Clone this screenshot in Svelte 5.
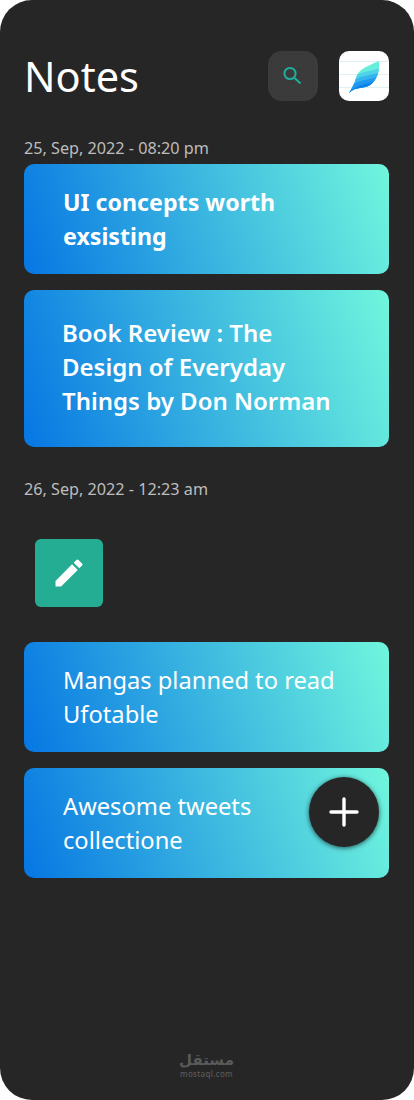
<script lang="ts">
  interface Note {
    title: string;
    weight?: string;
  }

  const first: Note[] = [
    { title: "UI concepts worth exsisting", weight: "bold" },
    { title: "Book Review : The Design of Everyday Things by Don Norman", weight: "semi" },
  ];
  const second: Note[] = [
    { title: "Mangas planned to read Ufotable" },
    { title: "Awesome tweets collectione" },
  ];
</script>

<div class="screen">
  <header class="top">
    <h1>Notes</h1>
    <button class="search" aria-label="Search">
      <svg width="24" height="24" viewBox="0 0 24 24" fill="none" stroke="#1fae9b" stroke-width="2">
        <circle cx="9" cy="9.5" r="5.6" />
        <path d="M13 13.5L19.5 19.5" />
      </svg>
    </button>
    <div class="logo">
      <svg width="50" height="50" viewBox="0 0 50 50">
        <defs>
          <clipPath id="leaf"><path d="M10 42 C13 37 16 32 17 27 C19 18 29 15 40 10 C41 20 38 29 31 34 C25 38 17 35 10 42 Z" /></clipPath>
        </defs>
        <path d="M0 10.5H50M0 23.5H50M0 36.5H50" stroke="#dcf0f6" stroke-width="1" />
        <g clip-path="url(#leaf)">
          <rect width="50" height="50" fill="#66eedd" />
          <path d="M8 29 C18 21 30 21 42 17 V50 H8 Z" fill="#4fd3e8" />
          <path d="M8 33 C18 25 30 25 42 21 V50 H8 Z" fill="#37b4ee" />
          <path d="M8 37 C18 29 30 29 42 25 V50 H8 Z" fill="#1f98f0" />
          <path d="M8 43 C18 33 28 33 42 29 V50 H8 Z" fill="#0f80ea" />
        </g>
      </svg>
    </div>
  </header>

  <p class="date">25, Sep, 2022 - 08:20 pm</p>
  <div class="notes">
    {#each first as note}
      <article class="card {note.weight ?? ''}">{note.title}</article>
    {/each}
  </div>

  <p class="date second">26, Sep, 2022 - 12:23 am</p>
  <button class="edit" aria-label="Edit">
    <svg width="36" height="36" viewBox="0 0 24 24" fill="#fff">
      <path d="M3 17.25V21h3.75L17.81 9.94l-3.75-3.75L3 17.25zM20.71 7.04a1 1 0 0 0 0-1.41l-2.34-2.34a1 1 0 0 0-1.41 0l-1.83 1.83 3.75 3.75 1.83-1.83z" />
    </svg>
  </button>

  <div class="notes lower">
    {#each second as note}
      <article class="card">{note.title}</article>
    {/each}
    <button class="fab" aria-label="Add note">
      <svg width="30" height="30" viewBox="0 0 30 30">
        <path d="M15 2V28M2 15H28" stroke="#fff" stroke-width="3.4" stroke-linecap="round" />
      </svg>
    </button>
  </div>

  <footer class="mark">
    <span class="ar" dir="rtl">مستقل</span>
    <span class="en">mostaql.com</span>
  </footer>
</div>

<style>
  :global(body) {
    background: #fff;
  }
  .screen {
    width: 414px;
    height: 1100px;
    box-sizing: border-box;
    padding: 51px 25px 0 24px;
    background: #262626;
    border-radius: 32px;
    display: flex;
    flex-direction: column;
    font-family: "Noto Sans", "Open Sans", sans-serif;
    color: #fff;
  }
  .top {
    display: flex;
    align-items: center;
    height: 50px;
  }
  h1 {
    margin: 0 auto 0 0;
    font-size: 41.5px;
    font-weight: 400;
    line-height: 50px;
  }
  .search {
    width: 50px;
    height: 50px;
    padding: 0;
    border: 0;
    border-radius: 14px;
    background-color: #3b3b3b;
    background-image: radial-gradient(circle, #2f2f2f 0.8px, transparent 1px);
    background-size: 7px 7px;
    display: flex;
    align-items: center;
    justify-content: center;
  }
  .logo {
    width: 50px;
    height: 50px;
    margin-left: 21px;
    background: #fff;
    border-radius: 10px;
    overflow: hidden;
  }
  .logo svg {
    display: block;
  }
  .date {
    margin: 37px 0 6px;
    font-size: 16.2px;
    line-height: 20px;
    color: #bdbdbd;
  }
  .date.second {
    margin-top: 32px;
    margin-bottom: 40px;
  }
  .notes {
    display: flex;
    flex-direction: column;
    gap: 16px;
  }
  .lower {
    position: relative;
    margin-top: 35px;
  }
  .card {
    padding: 21px 39px;
    font-size: 23.7px;
    line-height: 34px;
    border-radius: 10px;
    background: linear-gradient(72deg, #0676e3 0%, #70f6dd 100%);
  }
  .card.bold {
    font-size: 23.2px;
    font-weight: 700;
  }
  .card.semi {
    padding: 26px 38px 29px;
    font-size: 24px;
    font-weight: 600;
  }
  .edit {
    width: 68px;
    height: 68px;
    margin-left: 11px;
    padding: 0;
    border: 0;
    border-radius: 6px;
    background: #25ad94;
    display: flex;
    align-items: center;
    justify-content: center;
  }
  .fab {
    position: absolute;
    left: 285px;
    top: 135px;
    width: 70px;
    height: 70px;
    padding: 0;
    border: 0;
    border-radius: 50%;
    background: #262626;
    box-shadow: 0 1px 5px rgba(0, 0, 0, 0.65);
    display: flex;
    align-items: center;
    justify-content: center;
  }
  .mark {
    margin-top: auto;
    margin-bottom: 22px;
    display: flex;
    flex-direction: column;
    align-items: center;
    color: #5a5a5a;
  }
  .ar {
    font-family: "DejaVu Sans", sans-serif;
    font-size: 15px;
    font-weight: 700;
    line-height: 18px;
  }
  .en {
    font-size: 8px;
    line-height: 9px;
    font-weight: 500;
    letter-spacing: 0.3px;
  }
</style>
